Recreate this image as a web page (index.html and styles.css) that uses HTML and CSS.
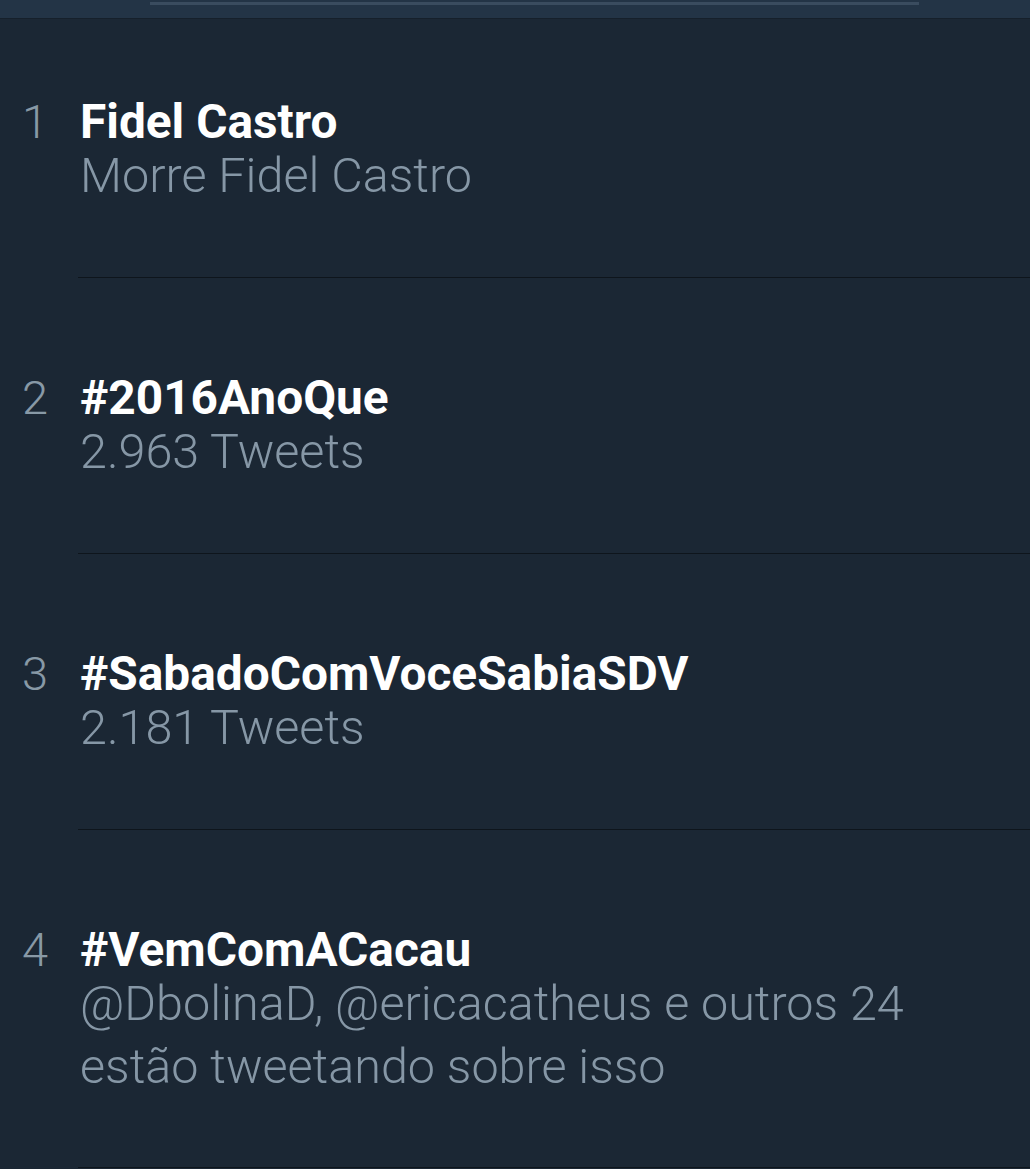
FILE: index.html
```html
<!DOCTYPE html>
<html lang="pt">
<head>
<meta charset="utf-8">
<title>Trends</title>
<link rel="stylesheet" href="styles.css">
</head>
<body>
<header class="topbar"><div class="topbar-line"></div></header>
<main class="trends">
  <div class="trend first">
    <div class="rank">1</div>
    <div class="body">
      <div class="title">Fidel Castro</div>
      <div class="sub">Morre Fidel Castro</div>
    </div>
  </div>
  <div class="trend">
    <div class="rank">2</div>
    <div class="body">
      <div class="title">#2016AnoQue</div>
      <div class="sub">2.963 Tweets</div>
    </div>
  </div>
  <div class="trend">
    <div class="rank">3</div>
    <div class="body">
      <div class="title">#SabadoComVoceSabiaSDV</div>
      <div class="sub">2.181 Tweets</div>
    </div>
  </div>
  <div class="trend last">
    <div class="rank">4</div>
    <div class="body">
      <div class="title">#VemComACacau</div>
      <div class="sub">@DbolinaD, @ericacatheus e outros 24<br>estão tweetando sobre isso</div>
    </div>
  </div>
</main>
</body>
</html>
```
FILE: styles.css
```css
html, body {
  margin: 0;
  padding: 0;
}
body {
  background: #1b2734;
  font-family: Roboto, "Noto Sans", sans-serif;
  width: 1030px;
  height: 1169px;
  overflow: hidden;
}
.topbar {
  height: 19px;
  background: #233446;
  border-bottom: 1px solid #16202b;
  padding-top: 2px;
  box-sizing: border-box;
}
.topbar-line {
  margin-left: 150px;
  width: 769px;
  height: 3px;
  background: #3a4c5f;
}
.trends {
  display: flex;
  flex-direction: column;
}
.trend {
  display: flex;
  align-items: baseline;
}
.rank {
  width: 70px;
  margin-right: 8px;
  text-align: center;
  font-weight: 300;
  font-size: 47px;
  line-height: 44px;
  color: #8899a6;
  flex: none;
}
.body {
  flex: 1;
  padding: 98px 0 70px 2px;
  border-bottom: 1px solid #0e151c;
}
.trend.first .body {
  padding-top: 81px;
}
.trend.last .body {
  padding-bottom: 69px;
}
.title {
  font-weight: 700;
  font-size: 47.8px;
  line-height: 44px;
  color: #ffffff;
}
.sub {
  font-weight: 300;
  font-size: 48.5px;
  line-height: 63px;
  color: #8697a6;
}
```
